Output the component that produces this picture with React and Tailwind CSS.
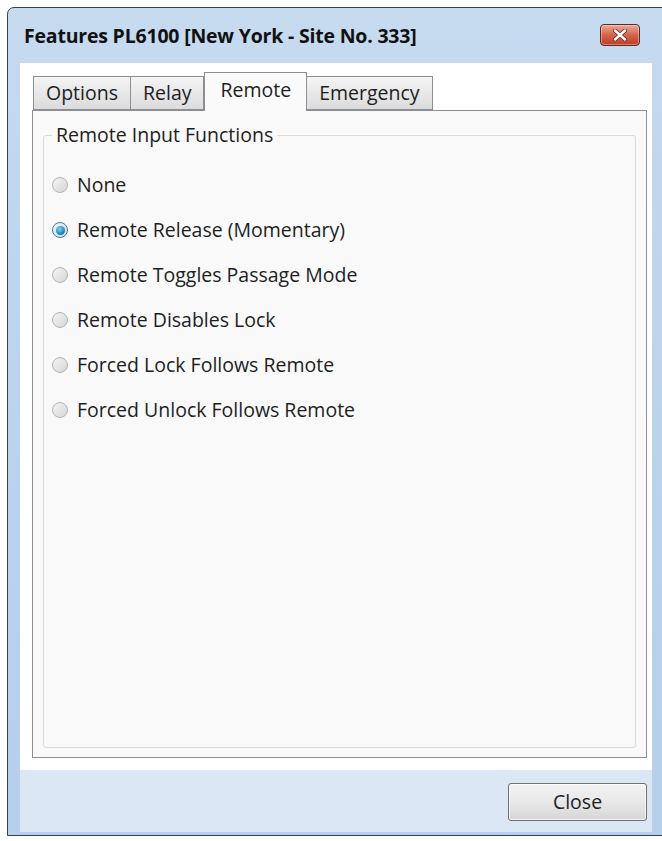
import { useState } from "react";

const OPTIONS = [
  "None",
  "Remote Release (Momentary)",
  "Remote Toggles Passage Mode",
  "Remote Disables Lock",
  "Forced Lock Follows Remote",
  "Forced Unlock Follows Remote",
];

const TABS = ["Options", "Relay", "Remote", "Emergency"];

function Radio({ checked }) {
  return (
    <span
      className={`relative flex h-[16px] w-[16px] shrink-0 items-center justify-center rounded-full border ${
        checked ? "border-[#3c7fb1]" : "border-[#b4b4b4]"
      } bg-gradient-to-br from-[#f4f4f4] to-[#d6d6d6]`}
    >
      {checked && (
        <span className="h-[9px] w-[9px] rounded-full bg-[radial-gradient(circle_at_40%_35%,#7fd3f5,#1b88c4_60%,#0e5f91)]" />
      )}
    </span>
  );
}

function Tab({ label, active }) {
  if (active) {
    return (
      <div className="relative z-10 -mb-px flex h-[39px] items-center border border-b-0 border-[#8c8e94] bg-[#fafafa] px-[15px] pb-[4px] text-[19.5px] text-[#1e1e1e]">
        {label}
      </div>
    );
  }
  return (
    <div className="mt-[4px] flex h-[34px] items-center border border-l-0 border-[#8c8e94] bg-gradient-to-b from-[#f4f4f4] to-[#dcdcdc] px-[12px] text-[19.5px] text-[#1e1e1e] first:border-l">
      {label}
    </div>
  );
}

export default function App() {
  const [selected, setSelected] = useState(1);
  const [tab] = useState("Remote");

  return (
    <div
      className="h-[841px] w-[662px] overflow-hidden bg-white pl-[7px] pt-[7px]"
      style={{ fontFamily: '"Open Sans", "Noto Sans", sans-serif' }}
    >
      <div className="flex h-[829px] w-[680px] flex-col rounded-t-[7px] border border-[#3d3f44] bg-gradient-to-b from-[#c6daf0] via-[#bcd3ec] to-[#b6cfea]">
        {/* title bar */}
        <div className="flex h-[55px] w-[632px] shrink-0 items-center justify-between pl-[16px]">
          <div className="text-[19.5px] font-bold tracking-[-0.2px] text-[#111]">
            Features PL6100 [New York - Site No. 333]
          </div>
          <button className="mt-[-2px] flex h-[22px] w-[40px] items-center justify-center rounded-[4px] border border-[#5a2a22] bg-gradient-to-b from-[#e9a99a] via-[#d4644c] to-[#c23c22] shadow-[inset_0_0_0_1px_rgba(255,255,255,0.35)]">
            <svg width="14" height="12" viewBox="0 0 14 12">
              <path
                d="M2 1.5 L12 10.5 M12 1.5 L2 10.5"
                stroke="#5a2a22"
                strokeWidth="4"
                strokeLinecap="round"
              />
              <path
                d="M2 1.5 L12 10.5 M12 1.5 L2 10.5"
                stroke="#ffffff"
                strokeWidth="2.4"
                strokeLinecap="round"
              />
            </svg>
          </button>
        </div>

        {/* client area */}
        <div className="ml-[12px] flex w-[632px] flex-col">
          <div className="flex h-[707px] flex-col bg-white pb-[12px] pl-[12px] pr-[5px] pt-[9px]">
            <div className="flex items-start pl-[1px]">
              {TABS.map((t) => (
                <Tab key={t} label={t} active={t === tab} />
              ))}
            </div>
            <div className="flex flex-1 flex-col border border-[#8c8e94] bg-[#f9f9f9] px-[10px] pb-[9px] pt-[24px]">
              <div className="relative flex-1 rounded-[3px] border border-[#d8dde2]">
                <div className="absolute left-[8px] top-[-14px] bg-[#f9f9f9] px-[4px] text-[19.5px] leading-[26px] text-[#1e1e1e]">
                  Remote Input Functions
                </div>
                <div className="flex flex-col gap-[19px] pl-[8px] pt-[36px]">
                  {OPTIONS.map((o, i) => (
                    <label
                      key={o}
                      className="flex h-[26px] cursor-default items-center gap-[9px] text-[19.5px] text-[#1e1e1e]"
                      onClick={() => setSelected(i)}
                    >
                      <Radio checked={selected === i} />
                      <span>{o}</span>
                    </label>
                  ))}
                </div>
              </div>
            </div>
          </div>

          {/* footer */}
          <div className="flex h-[62px] items-start justify-end bg-[#dbe7f4] pr-[5px] pt-[13px]">
            <button className="flex h-[38px] w-[139px] items-center justify-center rounded-[3px] border border-[#707070] bg-gradient-to-b from-[#f3f3f3] via-[#e8e8e8] to-[#d6d6d6] text-[19.5px] text-[#1e1e1e] shadow-[inset_0_0_0_1px_rgba(255,255,255,0.7)]">
              Close
            </button>
          </div>
        </div>
      </div>
    </div>
  );
}
